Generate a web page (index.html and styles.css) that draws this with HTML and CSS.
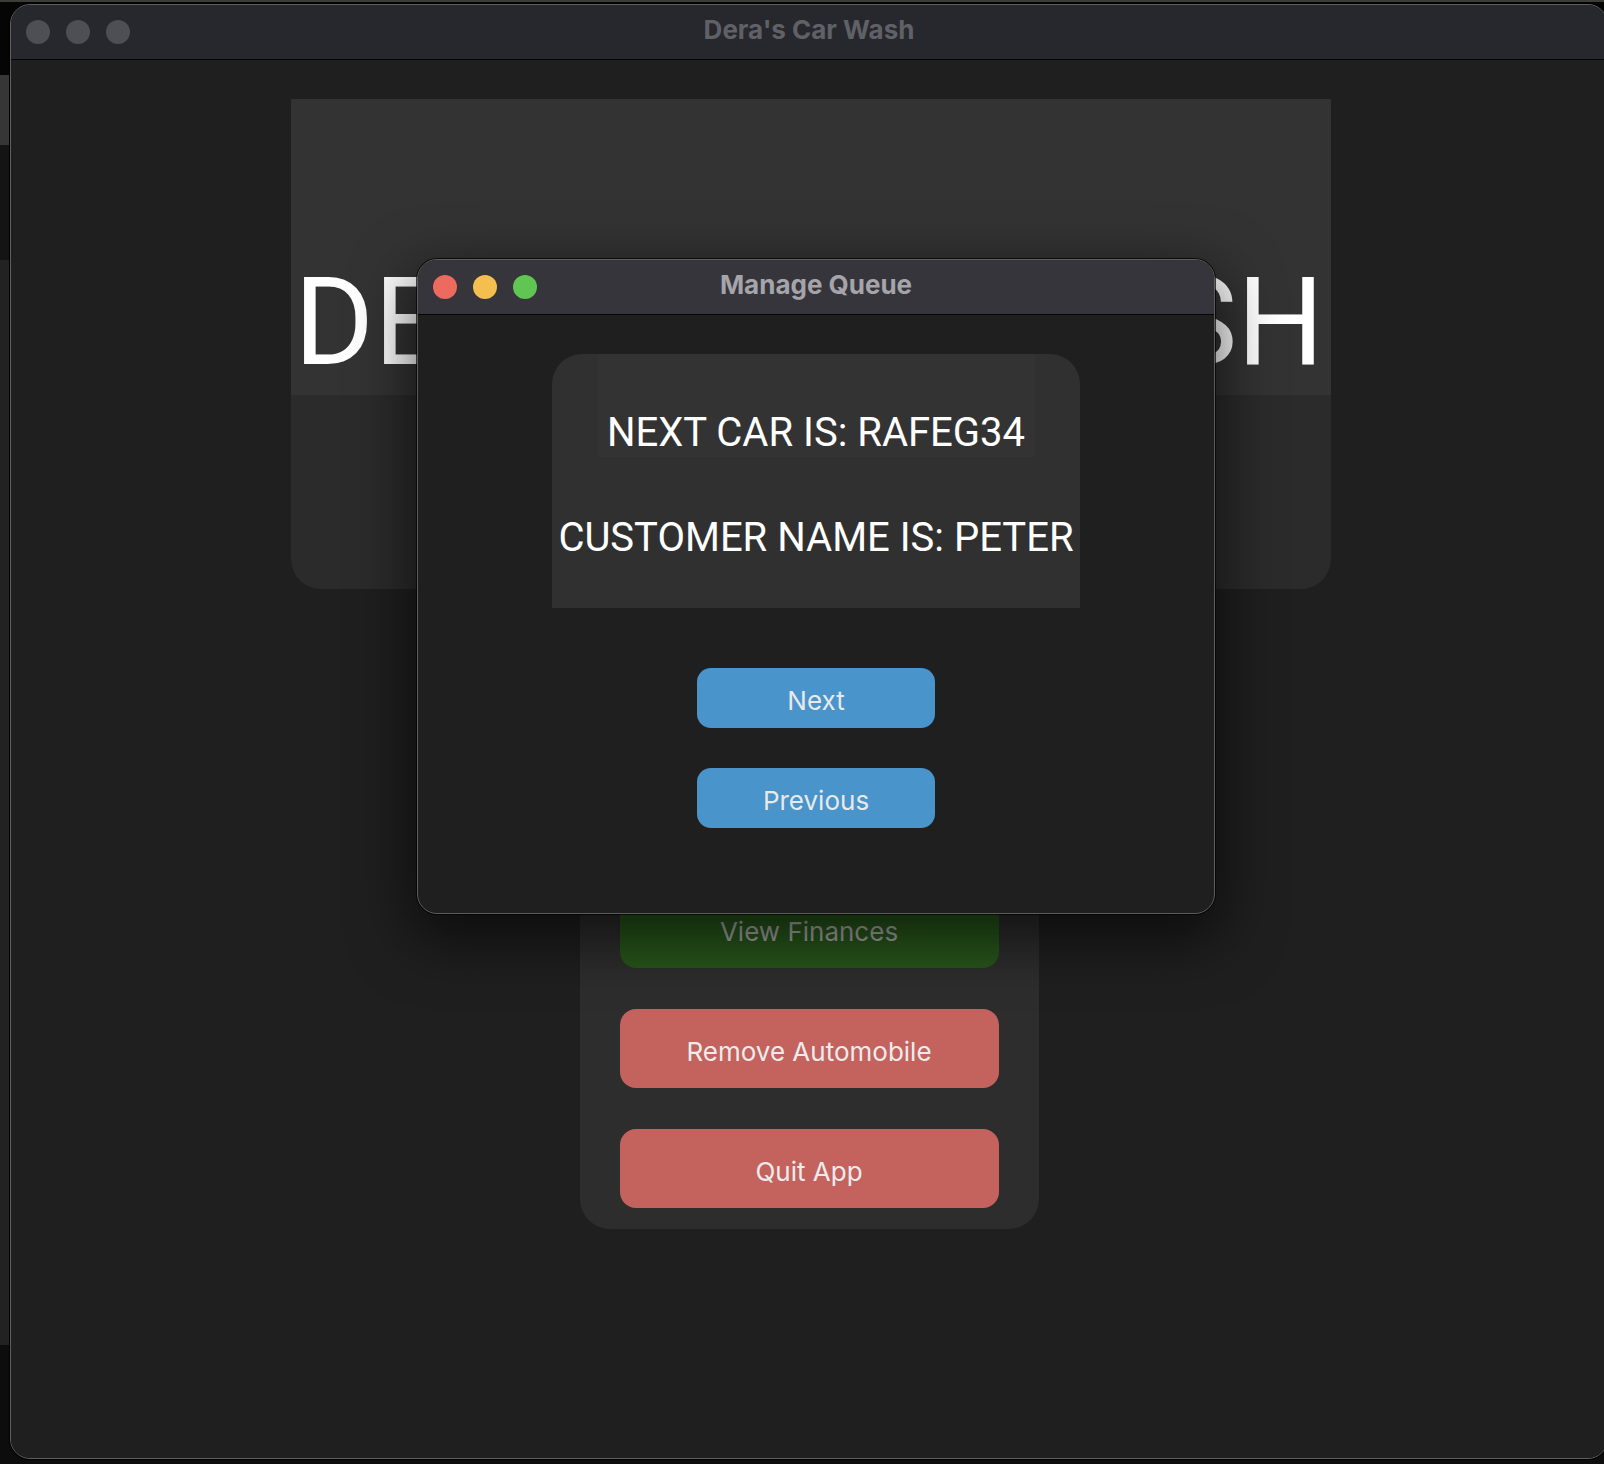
FILE: index.html
```html
<!DOCTYPE html>
<html lang="en">
<head>
<meta charset="utf-8">
<title>Dera's Car Wash</title>
<link rel="stylesheet" href="styles.css">
</head>
<body>
  <div class="desktop">
    <section class="window main-window">
      <header class="titlebar main-titlebar">
        <div class="lights">
          <span class="light off"></span>
          <span class="light off"></span>
          <span class="light off"></span>
        </div>
        <div class="title">Dera's Car Wash</div>
        <div></div>
      </header>
      <div class="main-content">
        <div class="hero">
          <div class="hero-top">
            <h1 class="hero-title">DERA'S CAR WASH</h1>
          </div>
          <div class="hero-bottom"></div>
        </div>
        <div class="menu-card">
          <div class="menu-spacer"></div>
          <button class="menu-btn green">View Finances</button>
          <button class="menu-btn red">Remove Automobile</button>
          <button class="menu-btn red">Quit App</button>
        </div>
      </div>
    </section>

    <section class="window dialog">
      <header class="titlebar dialog-titlebar">
        <div class="lights">
          <span class="light red-l"></span>
          <span class="light yellow-l"></span>
          <span class="light green-l"></span>
        </div>
        <div class="title">Manage Queue</div>
        <div></div>
      </header>
      <div class="dialog-body">
        <div class="info-card">
          <div class="info-label">NEXT CAR IS: RAFEG34</div>
          <div class="info-line">CUSTOMER NAME IS: PETER</div>
        </div>
        <div class="queue-actions">
          <button class="queue-btn">Next</button>
          <button class="queue-btn">Previous</button>
        </div>
      </div>
    </section>
  </div>
</body>
</html>
```

FILE: styles.css
```css
* { box-sizing: border-box; }

html, body {
  margin: 0;
  padding: 0;
}

body {
  width: 1604px;
  height: 1464px;
  overflow: hidden;
  background: linear-gradient(to bottom,
    #3c3c39 0px, #3c3c39 2px,
    #050505 2px, #050505 75px,
    #363636 75px, #363636 145px,
    #141414 145px, #141414 260px,
    #222222 260px, #222222 1345px,
    #0d0d0d 1345px);
  font-family: "Inter", "Roboto", "Liberation Sans", sans-serif;
}

.desktop {
  position: relative;
  width: 1604px;
  height: 1464px;
}

.window {
  position: absolute;
  display: flex;
  flex-direction: column;
  overflow: hidden;
  border: 1px solid #5f5f5f;
  border-radius: 20px;
}

.main-window {
  left: 10px;
  top: 4px;
  width: 1598px;
  height: 1455px;
  background: #1f1f1f;
  box-shadow: 0 0 0 1px #000;
}

.titlebar {
  display: grid;
  grid-template-columns: 1fr auto 1fr;
  align-items: center;
  height: 55px;
  flex: none;
  border-bottom: 1px solid #050505;
  padding: 0 15px 1px;
}

.main-titlebar {
  background: #27282d;
}

.dialog-titlebar {
  background: #36353b;
}

.lights {
  display: flex;
  gap: 16px;
  align-items: center;
}

.light {
  width: 24px;
  height: 24px;
  border-radius: 50%;
  display: block;
}

.light.off { background: #4e4f55; }
.light.red-l { background: #ec6a5e; }
.light.yellow-l { background: #f4bf4f; }
.light.green-l { background: #61c554; }

.title {
  font-family: "Inter", "Roboto", sans-serif;
  font-weight: 700;
  font-size: 26px;
  line-height: 30px;
  padding-bottom: 3px;
  text-align: center;
  white-space: nowrap;
}

.main-titlebar .title { color: #606166; }
.dialog-titlebar .title { color: #a5a4aa; }

.main-content {
  flex: 1;
  display: flex;
  flex-direction: column;
  align-items: center;
  padding-top: 39px;
  padding-left: 4px;
  background: #1f1f1f;
}

.hero {
  width: 1040px;
  display: flex;
  flex-direction: column;
  border-radius: 0 0 30px 30px;
  overflow: hidden;
}

.hero-top {
  background: #333333;
  height: 296px;
  padding-top: 163px;
}

.hero-title {
  margin: 0 0 0 -4px;
  font-family: "Roboto", "Liberation Sans", sans-serif;
  font-weight: 400;
  font-size: 122px;
  line-height: 122px;
  color: #ffffff;
  text-align: center;
  white-space: nowrap;
}

.hero-bottom {
  background: #2b2b2b;
  height: 194px;
}

.menu-card {
  width: 459px;
  margin-top: 20px;
  margin-left: -4px;
  background: #2d2d2d;
  border-radius: 30px;
  padding: 20px 40px 21px;
  display: flex;
  flex-direction: column;
  gap: 41px;
}

.menu-spacer {
  height: 219px;
}

.menu-btn {
  height: 79px;
  border: none;
  border-radius: 16px;
  font-family: "Inter", "Roboto", sans-serif;
  font-size: 26px;
  color: #ececec;
  padding: 6px 0 0;
}

.menu-btn.green {
  background: #27561a;
  color: #a6a6a6;
}

.menu-btn.red {
  background: #c4635e;
}

.dialog {
  left: 417px;
  top: 259px;
  width: 798px;
  height: 655px;
  background: #1f1f1f;
  border-color: #5d5d5d;
  box-shadow: 0 0 0 1px rgba(0,0,0,0.7), 0 20px 60px 6px rgba(0,0,0,0.6);
}

.dialog-body {
  flex: 1;
  display: flex;
  flex-direction: column;
  align-items: center;
  padding-top: 39px;
}

.info-card {
  width: 528px;
  height: 254px;
  background: #303030;
  border-radius: 30px 30px 0 0;
  display: flex;
  flex-direction: column;
  align-items: center;
  font-family: "Roboto", "Liberation Sans", sans-serif;
  font-size: 40px;
  line-height: 48px;
  color: #ffffff;
}

.info-label {
  width: 437px;
  height: 103px;
  background: #333333;
  padding-top: 55px;
  text-align: center;
  white-space: nowrap;
}

.info-line {
  margin-top: 57px;
  text-align: center;
  white-space: nowrap;
}

.queue-actions {
  display: flex;
  flex-direction: column;
  gap: 40px;
  margin-top: 60px;
}

.queue-btn {
  width: 238px;
  height: 60px;
  border: none;
  border-radius: 14px;
  background: #4894cb;
  color: #e9e9e9;
  font-family: "Inter", "Roboto", sans-serif;
  font-size: 26px;
  padding: 5px 0 0;
}
```
